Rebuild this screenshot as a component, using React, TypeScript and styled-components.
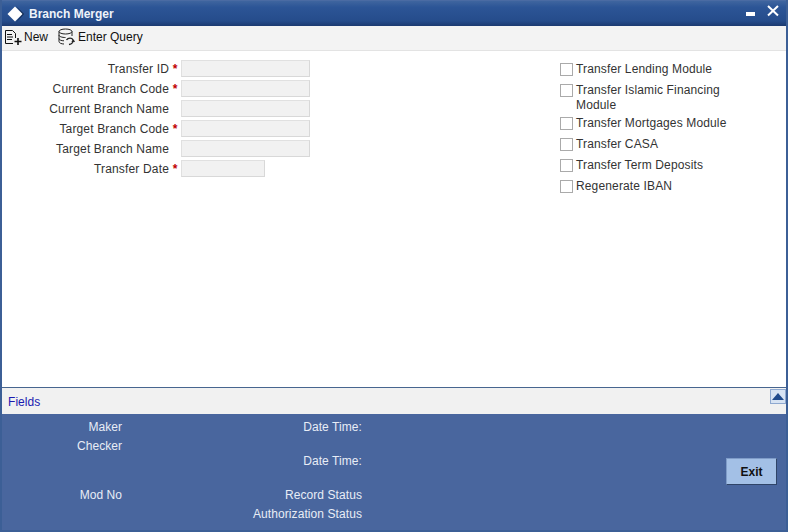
import styled, { createGlobalStyle } from 'styled-components';

const Global = createGlobalStyle`
  html, body {
    margin: 0;
    padding: 0;
    background: #fff;
  }
  * {
    box-sizing: border-box;
  }
`;

const Win = styled.div`
  width: 788px;
  height: 532px;
  display: flex;
  flex-direction: column;
  overflow: hidden;
  font-family: 'Liberation Sans', Arial, sans-serif;
  font-size: 12px;
  color: #333;
  background: #fff;
  border-left: 2px solid #3c5f96;
  border-right: 2px solid #3c5f96;
  border-bottom: 2px solid #3c5f96;
`;

const TitleBar = styled.div`
  height: 26px;
  margin-left: -2px;
  margin-right: -2px;
  padding: 1px 9px 0 7px;
  display: flex;
  align-items: center;
  gap: 5px;
  color: #fff;
  background: linear-gradient(#3f659f, #2c5596 25%, #254c8b 80%, #1c3a70);
  border-top: 1px solid #4a6ba3;
`;

const Title = styled.div`
  flex: 1;
  font-weight: bold;
  font-size: 12px;
  color: #eef3fa;
`;

const WinControls = styled.svg`
  margin-bottom: 4px;
`;

const Toolbar = styled.div`
  height: 25px;
  flex: none;
  display: flex;
  align-items: center;
  padding: 0 0 3px 2px;
  background: #f3f3f3;
  border-bottom: 1px solid #e3e3e3;
`;

const ToolButton = styled.div<{ $gap: number; $iconGap: number }>`
  display: flex;
  align-items: center;
  gap: ${(p) => p.$iconGap}px;
  margin-right: ${(p) => p.$gap}px;
  color: #111;
`;

const Content = styled.div`
  flex: 1;
  display: flex;
  justify-content: space-between;
  padding: 9px 0 0 0;
`;

const FormCol = styled.div`
  width: 308px;
  display: flex;
  flex-direction: column;
  gap: 3px;
`;

const FormRow = styled.div`
  display: flex;
  align-items: center;
  height: 17px;
`;

const Label = styled.div`
  width: 167px;
  text-align: right;
  letter-spacing: 0.16px;
`;

const Star = styled.div`
  width: 12px;
  text-align: center;
  font-weight: bold;
  color: #c00000;
`;

const Field = styled.div<{ $w: number }>`
  width: ${(p) => p.$w}px;
  height: 17px;
  background: #f1f1f1;
  border: 1px solid #e0e0e0;
  border-right-color: #d8d8d8;
  border-bottom-color: #d8d8d8;
`;

const CheckCol = styled.div`
  width: 226px;
  padding-top: 1px;
  display: flex;
  flex-direction: column;
`;

const CheckRow = styled.div<{ $h: number }>`
  display: flex;
  height: ${(p) => p.$h}px;
  gap: 3px;
  line-height: 15px;
`;

const Box = styled.div`
  width: 13px;
  height: 13px;
  margin-top: 2px;
  flex: none;
  background: #fff;
  border: 1px solid #aaa;
`;

const CheckText = styled.div`
  width: 160px;
  padding-top: 1px;
  letter-spacing: 0.14px;
`;

const FieldsBar = styled.div`
  height: 27px;
  flex: none;
  display: flex;
  align-items: center;
  justify-content: space-between;
  padding-left: 6px;
  background: #f1f1f1;
  border-top: 1px solid #47658f;
  color: #1a1ab0;
`;

const FieldsLabel = styled.div`
  padding-top: 2px;
  letter-spacing: 0.05px;
`;

const ArrowBox = styled.div`
  width: 16px;
  height: 15px;
  margin-bottom: 9px;
  display: flex;
  align-items: center;
  justify-content: center;
  background: #d7e3f3;
  border: 1px solid #8fa9d0;
`;

const Footer = styled.div`
  height: 116px;
  flex: none;
  display: flex;
  background: #49669e;
  color: #e8edf6;
`;

const AuditCol = styled.div<{ $w: number; $spacing: number }>`
  width: ${(p) => p.$w}px;
  padding-top: 6px;
  display: flex;
  flex-direction: column;
  text-align: right;
  letter-spacing: ${(p) => p.$spacing}px;
`;

const AuditRow = styled.div<{ $top?: number }>`
  height: 15px;
  line-height: 15px;
  margin-top: ${(p) => p.$top ?? 0}px;
`;

const ExitWrap = styled.div`
  flex: 1;
  display: flex;
  justify-content: flex-end;
  padding: 44px 9px 0 0;
`;

const ExitButton = styled.div`
  width: 51px;
  height: 27px;
  display: flex;
  align-items: center;
  justify-content: center;
  font-weight: bold;
  color: #111;
  background: #a3c0e6;
  border: 1px solid #7f9cc8;
  border-right-color: #2f4468;
  border-bottom-color: #2f4468;
`;

const fields = [
  { label: 'Transfer ID', req: true, w: 129 },
  { label: 'Current Branch Code', req: true, w: 129 },
  { label: 'Current Branch Name', req: false, w: 129 },
  { label: 'Target Branch Code', req: true, w: 129 },
  { label: 'Target Branch Name', req: false, w: 129 },
  { label: 'Transfer Date', req: true, w: 84 },
];

const checks = [
  { label: 'Transfer Lending Module', h: 21 },
  { label: 'Transfer Islamic Financing Module', h: 33 },
  { label: 'Transfer Mortgages Module', h: 21 },
  { label: 'Transfer CASA', h: 21 },
  { label: 'Transfer Term Deposits', h: 21 },
  { label: 'Regenerate IBAN', h: 21 },
];

export default function App() {
  return (
    <>
      <Global />
      <Win>
        <TitleBar>
          <svg width="17" height="17" viewBox="0 0 17 17">
            <path d="M9 0 L17 8 L9 16.5 L15.5 8 Z" fill="#0f2447" />
            <path d="M8 0.5 L15.5 8 L8 15.5 L0.5 8 Z" fill="#fff" />
          </svg>
          <Title>Branch Merger</Title>
          <WinControls width="34" height="14" viewBox="0 0 34 14">
            <rect x="1" y="7" width="9" height="4" fill="#fff" />
            <path d="M23 1 L33 10.5 M33 1 L23 10.5" stroke="#fff" strokeWidth="2" fill="none" />
          </WinControls>
        </TitleBar>
        <Toolbar>
          <ToolButton $gap={9} $iconGap={2}>
            <svg width="18" height="18" viewBox="0 0 18 18" fill="none" stroke="#111">
              <path d="M1.5 15.5 V2.5 H8.5 L11.5 5.5 V10" />
              <path d="M3 6.5 H8 M3 9 H9 M3 11.5 H8 M1.5 15.5 H9" />
              <path d="M14 10 V17 M10.5 13.5 H17.5" strokeWidth="1.6" />
            </svg>
            New
          </ToolButton>
          <ToolButton $gap={0} $iconGap={3}>
            <svg width="18" height="18" viewBox="0 0 18 18" fill="none" stroke="#222">
              <ellipse cx="8.5" cy="3.5" rx="6.5" ry="2.5" />
              <path d="M2 3.5 V13.5 C2 15 4.5 16 7 16 M15 3.5 V8" />
              <path d="M2 7 C2 8.6 5 9.5 8.5 9.5 M2 10.5 C2 12 4.5 12.8 7 12.8" />
              <path d="M9.5 12 C11 9.5 15 9.5 16 12 C16.5 14 15 16 12 16.5 M15 14 L16.2 12.2 L17.5 13.8" strokeWidth="1.3" />
            </svg>
            Enter Query
          </ToolButton>
        </Toolbar>
        <Content>
          <FormCol>
            {fields.map((f) => (
              <FormRow key={f.label}>
                <Label>{f.label}</Label>
                <Star>{f.req ? '*' : ''}</Star>
                <Field $w={f.w} />
              </FormRow>
            ))}
          </FormCol>
          <CheckCol>
            {checks.map((c) => (
              <CheckRow key={c.label} $h={c.h}>
                <Box />
                <CheckText>{c.label}</CheckText>
              </CheckRow>
            ))}
          </CheckCol>
        </Content>
        <FieldsBar>
          <FieldsLabel>Fields</FieldsLabel>
          <ArrowBox>
            <svg width="12" height="7" viewBox="0 0 12 7">
              <path d="M6 0 L12 7 H0 Z" fill="#1f4a8c" />
            </svg>
          </ArrowBox>
        </FieldsBar>
        <Footer>
          <AuditCol $w={120} $spacing={0.04}>
            <AuditRow>Maker</AuditRow>
            <AuditRow $top={4}>Checker</AuditRow>
            <AuditRow $top={34}>Mod No</AuditRow>
          </AuditCol>
          <AuditCol $w={240} $spacing={0.08}>
            <AuditRow>Date Time:</AuditRow>
            <AuditRow $top={19}>Date Time:</AuditRow>
            <AuditRow $top={19}>Record Status</AuditRow>
            <AuditRow $top={4}>Authorization Status</AuditRow>
          </AuditCol>
          <ExitWrap>
            <ExitButton>Exit</ExitButton>
          </ExitWrap>
        </Footer>
      </Win>
    </>
  );
}
